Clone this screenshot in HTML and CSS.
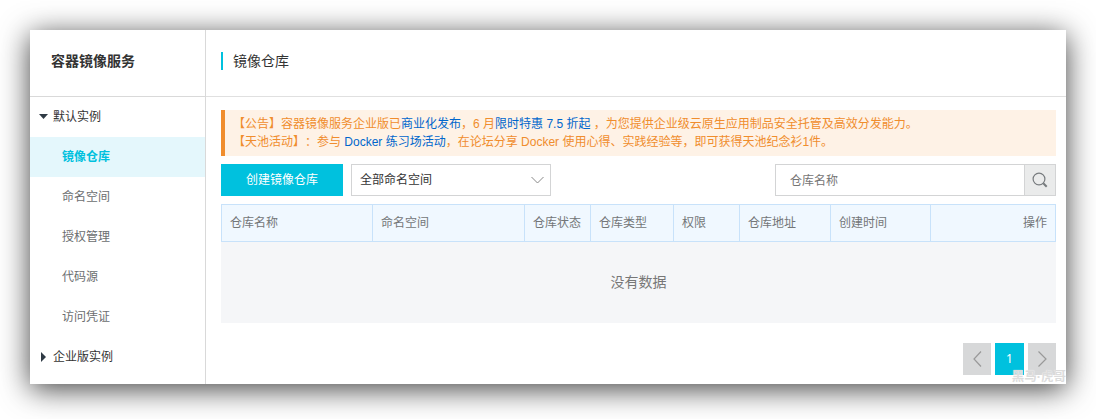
FILE: index.html
```html
<!DOCTYPE html>
<html lang="zh-CN">
<head>
<meta charset="utf-8">
<title>容器镜像服务</title>
<link rel="stylesheet" href="styles.css">
</head>
<body>
<div class="window">
  <aside class="sidebar">
    <h1 class="product">容器镜像服务</h1>
    <nav class="menu">
      <div class="group"><svg class="caret" viewBox="0 0 9 10"><path d="M0 2h9L4.500 7z"/></svg>默认实例</div>
      <a class="item active">镜像仓库</a>
      <a class="item">命名空间</a>
      <a class="item">授权管理</a>
      <a class="item">代码源</a>
      <a class="item">访问凭证</a>
      <div class="group"><svg class="caret" viewBox="0 0 9 10"><path d="M2 0v10l5-5z"/></svg>企业版实例</div>
    </nav>
  </aside>
  <main class="main">
    <header class="header"><h2 class="title">镜像仓库</h2></header>
    <div class="content">
      <div class="notice">
        <p>【公告】容器镜像服务企业版已<a>商业化发布</a>，6 月<a>限时特惠 7.5 折起</a> ，为您提供企业级云原生应用制品安全托管及高效分发能力。</p>
        <p>【天池活动】：参与 <a>Docker 练习场活动</a>，在论坛分享 Docker 使用心得、实践经验等，即可获得天池纪念衫1件。</p>
      </div>
      <div class="toolbar">
        <button class="create">创建镜像仓库</button>
        <div class="select">全部命名空间<svg class="chevron" viewBox="0 0 13 8"><path d="M.5 1l6 6 6-6"/></svg></div>
        <div class="search">
          <span class="field">仓库名称</span>
          <span class="search-btn"><svg class="lens" viewBox="0 0 16 16"><circle cx="7" cy="7" r="5.900"/><path d="M11.300 11.300l3.400 3.400"/></svg></span>
        </div>
      </div>
      <table class="table">
        <colgroup><col class="c-name"><col class="c-space"><col class="c-status"><col class="c-type"><col class="c-auth"><col class="c-addr"><col class="c-time"><col></colgroup>
        <thead><tr><th>仓库名称</th><th>命名空间</th><th>仓库状态</th><th>仓库类型</th><th>权限</th><th>仓库地址</th><th>创建时间</th><th class="actions">操作</th></tr></thead>
      </table>
      <div class="empty">没有数据</div>
      <div class="pager">
        <span class="page"><svg class="arrow" viewBox="0 0 10 16"><path d="M9 .5L2 8l7 7.500"/></svg></span>
        <span class="page current">1</span>
        <span class="page"><svg class="arrow" viewBox="0 0 10 16"><path d="M1.500.5L9 8l-7.500 7.500"/></svg></span>
      </div>
    </div>
  </main>
  <span class="watermark">黑马·虎哥</span>
</div>
</body>
</html>
```
FILE: styles.css
```css
* { box-sizing: border-box; }
body {
  margin: 0;
  padding: 30px;
  height: 419px;
  overflow: hidden;
  background: #fff;
  font: 12px/18px "Liberation Sans", "Noto Sans CJK SC", sans-serif;
  text-spacing-trim: space-all;
  color: #333;
}
h1, h2, p { margin: 0; font: inherit; }
svg { display: block; fill: none; }
.window {
  position: relative;
  display: flex;
  width: 1036px;
  height: 354px;
  background: #fff;
  box-shadow: 0 5px 28px rgba(0, 0, 0, .75);
}
.sidebar { width: 176px; border-right: 1px solid #d9d9d9; }
.product {
  height: 67px;
  padding: 22px 0 0 21px;
  border-bottom: 1px solid #d9d9d9;
  font-size: 14px;
  font-weight: bold;
}
.group { display: flex; align-items: center; height: 40px; padding-left: 9px; }
.caret { width: 9px; height: 10px; margin-right: 5px; fill: #2f3a45; }
.item { display: block; height: 40px; padding-left: 32px; line-height: 40px; color: #6b6e70; }
.item.active { background: #e4f7fc; color: #00c1de; font-weight: bold; }
.main { flex: 1; }
.header { height: 67px; padding: 22px 15px 0; border-bottom: 1px solid #e0e0e0; }
.title { border-left: 2px solid #00c1de; padding-left: 10px; font-size: 14px; line-height: 18px; }
.content { padding: 13px 10px 0 15px; }
.notice {
  height: 46px;
  padding: 5px 0 0 8px;
  border-left: 4px solid #f08d2d;
  background: #fef2e6;
  color: #f08d2d;
  white-space: nowrap;
}
.notice a { color: #06c; }
.toolbar { display: flex; height: 32px; margin: 8px 0; }
.create {
  width: 122px;
  margin-right: 8px;
  padding: 0;
  border: 0;
  background: #00c1de;
  color: #fff;
  font: inherit;
}
.select {
  display: flex;
  align-items: center;
  justify-content: space-between;
  width: 200px;
  padding: 0 6px 0 8px;
  border: 1px solid #d3d4d5;
}
.chevron { width: 13px; height: 8px; stroke: #888; }
.search { display: flex; width: 281px; margin-left: auto; border: 1px solid #d3d4d5; }
.field { flex: 1; padding-left: 14px; line-height: 32px; color: #757575; }
.search-btn {
  display: grid;
  place-items: center;
  width: 31px;
  border-left: 1px solid #d3d4d5;
  background: #eaebeb;
}
.lens { width: 16px; height: 16px; stroke: #777b7e; stroke-width: 1.2; }
.lens path { stroke-width: 2; }
.table { width: 835px; table-layout: fixed; border-collapse: separate; border-spacing: 0; border-right: 1px solid #c8e2fa; }
.table th {
  height: 38px;
  padding: 0 0 0 8px;
  border: 1px solid #c8e2fa;
  border-right: 0;
  background: #f0f8ff;
  color: #737678;
  font-weight: normal;
  text-align: left;
}
.table .actions { padding-right: 8px; text-align: right; }
.c-name { width: 151px; }
.c-space { width: 152px; }
.c-status { width: 66px; }
.c-type { width: 83px; }
.c-auth { width: 66px; }
.c-addr { width: 91px; }
.c-time { width: 100px; }
.empty { height: 81px; background: #f5f6f8; color: #777; font-size: 14px; line-height: 81px; text-align: center; }
.pager { display: flex; justify-content: flex-end; gap: 4px; margin-top: 20px; }
.page { display: grid; place-items: center; width: 28px; height: 32px; background: #d7d8d9; }
.current { width: 29px; background: #00c1de; color: #fff; font-family: "Noto Sans", sans-serif; }
.arrow { width: 10px; height: 16px; stroke: #999; stroke-width: 1.2; }
.watermark {
  position: absolute;
  right: 0;
  bottom: 0;
  color: #dcdcdc;
  font-size: 12.500px;
  font-weight: bold;
  line-height: 14px;
  text-shadow: 0 0 1px #fff;
}
```
